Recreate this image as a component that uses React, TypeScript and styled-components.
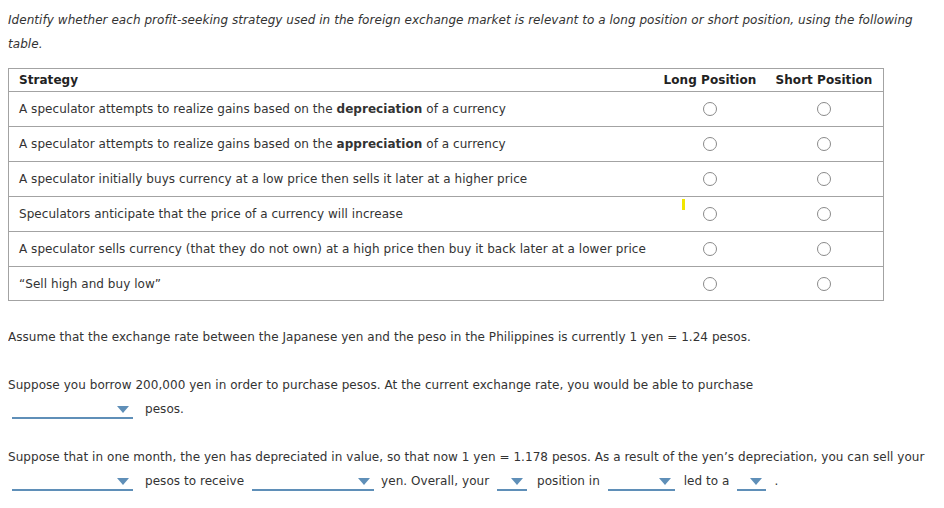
import React from "react";
import styled, { createGlobalStyle } from "styled-components";

const Global = createGlobalStyle`
  body {
    margin: 8px;
    font-family: "DejaVu Sans", Verdana, sans-serif;
    font-size: 12px;
    letter-spacing: 0.05px;
    color: #333;
    background: #fff;
  }
`;

const Intro = styled.p`
  margin: 0;
  font-style: italic;
  line-height: 24px;
`;

const Table = styled.div`
  margin-top: 12px;
  width: 876px;
  box-sizing: border-box;
  border: 1px solid #a3a3a3;
  display: grid;
  grid-template-columns: 1fr 110px 118px;
`;

const Cell = styled.div<{ $head?: boolean; $center?: boolean; $last?: boolean }>`
  position: relative;
  height: ${(p) => (p.$head ? "21px" : p.$last ? "33px" : "34px")};
  display: flex;
  align-items: center;
  justify-content: ${(p) => (p.$center ? "center" : "flex-start")};
  padding-left: ${(p) => (p.$center ? "0" : "10px")};
  padding-bottom: ${(p) => (p.$head ? "1px" : "0")};
  border-bottom: ${(p) => (p.$last ? "none" : "1px solid #a3a3a3")};
  font-weight: ${(p) => (p.$head ? "bold" : "normal")};
  color: ${(p) => (p.$head ? "#222" : "#333")};
  white-space: nowrap;
`;

const Radio = styled.span`
  width: 12px;
  height: 12px;
  border: 1px solid #8a8a8a;
  border-radius: 50%;
  box-sizing: content-box;
  display: inline-block;
`;

const Highlight = styled.span`
  position: absolute;
  left: 27px;
  top: 2px;
  width: 3px;
  height: 11px;
  background: #f2e600;
`;

const Para = styled.p`
  margin: 24px 0 0;
  line-height: 24px;
  white-space: nowrap;
`;

const Drop = styled.span<{ $w: number; $mr: number }>`
  display: inline-block;
  position: relative;
  width: ${(p) => p.$w}px;
  height: 15px;
  vertical-align: -6px;
  border-bottom: 2px solid #5f8fb8;
  margin: 0 ${(p) => p.$mr}px 0 4px;
  &::after {
    content: "";
    position: absolute;
    right: 4px;
    top: 4px;
    border-left: 6px solid transparent;
    border-right: 6px solid transparent;
    border-top: 7px solid #5f8fb8;
  }
`;

const rows: React.ReactNode[] = [
  <>A speculator attempts to realize gains based on the <b>depreciation</b> of a currency</>,
  <>A speculator attempts to realize gains based on the <b>appreciation</b> of a currency</>,
  <>A speculator initially buys currency at a low price then sells it later at a higher price</>,
  <>Speculators anticipate that the price of a currency will increase</>,
  <>A speculator sells currency (that they do not own) at a high price then buy it back later at a lower price</>,
  <>“Sell high and buy low”</>,
];

export default function App() {
  return (
    <>
      <Global />
      <Intro>
        Identify whether each profit-seeking strategy used in the foreign exchange market is relevant to a long position or short position, using the following table.
      </Intro>
      <Table>
        <Cell $head>Strategy</Cell>
        <Cell $head $center>Long Position</Cell>
        <Cell $head $center>Short Position</Cell>
        {rows.map((r, i) => {
          const last = i === rows.length - 1;
          return (
            <React.Fragment key={i}>
              <Cell $last={last}>
                <span>{r}</span>
              </Cell>
              <Cell $center $last={last}>
                {i === 3 && <Highlight />}
                <Radio />
              </Cell>
              <Cell $center $last={last}>
                <Radio />
              </Cell>
            </React.Fragment>
          );
        })}
      </Table>
      <Para>
        Assume that the exchange rate between the Japanese yen and the peso in the Philippines is currently 1 yen = 1.24 pesos.
      </Para>
      <Para>
        Suppose you borrow 200,000 yen in order to purchase pesos. At the current exchange rate, you would be able to purchase
        <br />
        <Drop $w={121} $mr={12} />pesos.
      </Para>
      <Para>
        Suppose that in one month, the yen has depreciated in value, so that now 1 yen = 1.178 pesos. As a result of the yen’s depreciation, you can sell your
        <br />
        <Drop $w={121} $mr={12} />pesos to receive <Drop $w={122} $mr={7} />yen. Overall, your <Drop $w={30} $mr={10} />position in <Drop $w={67} $mr={9} />led to a <Drop $w={29} $mr={8} />.
      </Para>
    </>
  );
}
